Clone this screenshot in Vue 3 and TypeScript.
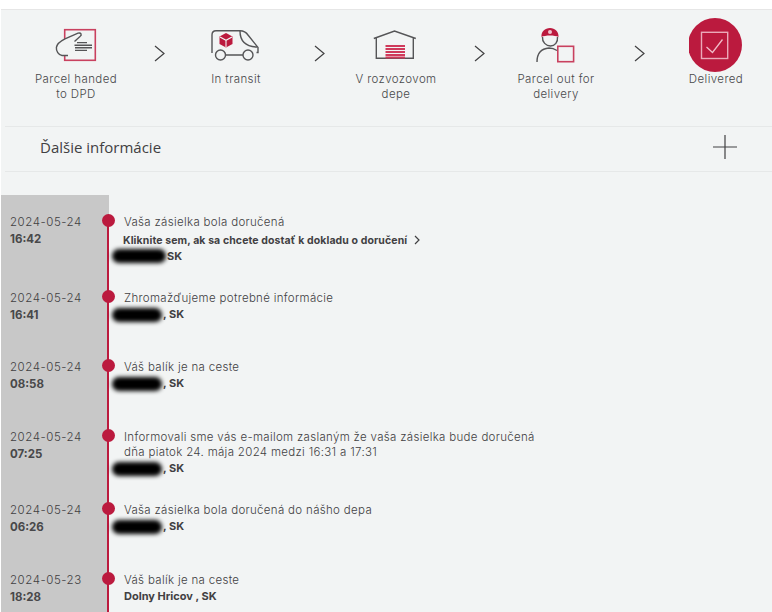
<script setup lang="ts">
interface Entry { date: string; time: string; lines: string[]; link?: string; redact: number; place: string; height: number }
const entries: Entry[] = [
  { date: '2024-05-24', time: '16:42', lines: ['Vaša zásielka bola doručená'], link: 'Kliknite sem, ak sa chcete dostať k dokladu o doručení', redact: 54, place: 'SK', height: 76 },
  { date: '2024-05-24', time: '16:41', lines: ['Zhromažďujeme potrebné informácie'], redact: 50, place: ', SK', height: 69 },
  { date: '2024-05-24', time: '08:58', lines: ['Váš balík je na ceste'], redact: 50, place: ', SK', height: 70 },
  { date: '2024-05-24', time: '07:25', lines: ['Informovali sme vás e-mailom zaslaným že vaša zásielka bude doručená', 'dňa piatok 24. mája 2024 medzi 16:31 a 17:31'], redact: 50, place: ', SK', height: 73 },
  { date: '2024-05-24', time: '06:26', lines: ['Vaša zásielka bola doručená do nášho depa'], redact: 50, place: ', SK', height: 70 },
  { date: '2024-05-23', time: '18:28', lines: ['Váš balík je na ceste'], redact: 0, place: 'Dolny Hricov , SK', height: 60 },
]
</script>

<template>
  <div class="page">
    <section class="steps">
      <div class="step">
        <svg class="icon" viewBox="49 18 54 54">
          <rect x="64.7" y="29.7" width="30.6" height="30.6" class="red-line" />
          <path class="hand" d="M68 55.5H62C58.5 55.3 56 51 56.4 47.4C56.8 43.4 60.5 41 65 38.8L78 33.2C81 32.2 82.3 35 80 36.5L74.5 41.5" />
          <path class="gray-line" d="M77 42.6H87M74.5 45.2H92M75 47.8H92M75 50.4H87" />
        </svg>
        <span class="label">Parcel handed<br />to DPD</span>
        <svg class="chevron" viewBox="0 0 11 17"><path d="M1 1L10 8.5L1 16" /></svg>
      </div>
      <div class="step">
        <svg class="icon" viewBox="209 18 54 54">
          <path class="gray-line" d="M212 53V35C212 32 213.5 30.7 216 30.7H240C244 30.7 246 32 248 35L258 47.5V52.5H256.5M225.5 55H243" />
          <path class="gray-line" d="M240 31C240 40 244 46.5 257 47" />
          <circle class="gray-line" cx="220.5" cy="55" r="5" />
          <circle class="gray-line" cx="248" cy="55" r="5" />
          <path fill="#bb1a3e" d="M226 33L232.5 36.5V44L226 47.5L219.5 44V36.5Z" />
          <path d="M220 37L226 40.3L232 37M226 40.3V47" stroke="#f2f4f4" stroke-width="1.1" fill="none" />
        </svg>
        <span class="label">In transit</span>
        <svg class="chevron" viewBox="0 0 11 17"><path d="M1 1L10 8.5L1 16" /></svg>
      </div>
      <div class="step">
        <svg class="icon" viewBox="369 18 54 54">
          <path class="gray-line" d="M373.8 38.5L394.5 31L415.8 38.5M376.3 38V58.3H413.3V38" />
          <path d="M385.5 46H405M385.5 49H405M385.5 52H405M385.5 55H405M385.5 57.5H405" stroke="#cf3a5b" stroke-width="1.8" fill="none" />
        </svg>
        <span class="label">V rozvozovom<br />depe</span>
        <svg class="chevron" viewBox="0 0 11 17"><path d="M1 1L10 8.5L1 16" /></svg>
      </div>
      <div class="step">
        <svg class="icon" viewBox="529 18 54 54">
          <path class="gray-line" d="M542.5 37C542 42 546 46 550.5 46C555 46 558 42 557.5 37M537 62C537 53 542 48.5 549 48C552 48 554 48.5 557 50.5" />
          <path fill="#bb1a3e" d="M541.5 37C541 31.5 545 28 550 28C555 28 558.8 31.5 558.5 37C555 35 545 35 541.5 37Z" />
          <circle cx="550" cy="32" r="2" fill="#f0c4cf" />
          <rect x="557.8" y="46.3" width="15.8" height="15.4" class="red-line" />
        </svg>
        <span class="label">Parcel out for<br />delivery</span>
        <svg class="chevron" viewBox="0 0 11 17"><path d="M1 1L10 8.5L1 16" /></svg>
      </div>
      <div class="step">
        <svg class="icon" viewBox="690 18 54 54">
          <circle cx="716" cy="45" r="27" fill="#bb1a3e" />
          <rect x="702.5" y="32.3" width="26.2" height="26.2" fill="none" stroke="#eba9b8" stroke-width="1.4" />
          <path d="M707.5 47L713.5 52.5L723.5 39.5" fill="none" stroke="#f0bcc8" stroke-width="1.3" />
        </svg>
        <span class="label">Delivered</span>
      </div>
    </section>

    <section class="more">
      <span class="more-title">Ďalšie informácie</span>
      <svg class="plus" viewBox="0 0 24 24"><path d="M12 0V24M0 12H24" /></svg>
    </section>

    <section class="timeline">
      <div v-for="(e, i) in entries" :key="i" class="row" :class="{ first: i === 0 }" :style="{ height: e.height + 'px' }">
        <div class="when">
          <div class="date">{{ e.date }}</div>
          <div class="time">{{ e.time }}</div>
        </div>
        <span class="dot"></span>
        <div class="what">
          <div v-for="(l, j) in e.lines" :key="j" class="line">{{ l }}</div>
          <a v-if="e.link" class="link">{{ e.link }}<svg class="link-arrow" viewBox="0 0 6 10"><path d="M1 1L5 5L1 9" /></svg></a>
          <div class="place" :class="{ tight: e.link }">
            <span v-if="e.redact" class="redact" :style="{ width: e.redact + 'px' }"></span>{{ e.place }}
          </div>
        </div>
      </div>
    </section>
  </div>
</template>

<style>
html, body { margin: 0; background: #fff; overflow: hidden; }
</style>

<style scoped>
.page {
  height: 603px;
  box-sizing: border-box;
  margin-top: 9px;
  margin-left: 1px;
  border-top: 1px solid #e6e6e6;
  background: #f2f4f4;
  display: flex;
  flex-direction: column;
  overflow: hidden;
  font-family: Inter, "Liberation Sans", sans-serif;
  color: #414042;
}
.steps {
  display: flex;
  flex: none;
  height: 116px;
  padding-top: 8px;
  box-sizing: border-box;
}
.step {
  position: relative;
  flex: 0 0 160px;
  box-sizing: border-box;
  padding-right: 10px;
  display: flex;
  flex-direction: column;
  align-items: center;
}
.icon { width: 54px; height: 54px; display: block; flex: none; }
.label {
  font-size: 11.5px;
  line-height: 15px;
  text-align: center;
  letter-spacing: 0.4px;
  font-weight: 300;
  color: #48484a;
}
.chevron {
  position: absolute;
  left: 153px;
  top: 27px;
  width: 11px;
  height: 17px;
}
.chevron path { fill: none; stroke: #414042; stroke-width: 1.2; }
.red-line { fill: none; stroke: #c9415f; stroke-width: 1.6; }
.hand { fill: #f2f4f4; stroke: #555557; stroke-width: 1.4; }
.gray-line { fill: none; stroke: #555557; stroke-width: 1.4; }
.more {
  flex: none;
  margin-left: 4px;
  height: 46px;
  box-sizing: border-box;
  border-top: 1px solid #e6e8e8;
  border-bottom: 1px solid #e6e8e8;
  display: flex;
  align-items: center;
  justify-content: space-between;
  padding: 0 35px 4px;
}
.more-title {
  font-family: "Open Sans", sans-serif;
  font-size: 15px;
  color: #414042;
}
.plus { width: 24px; height: 24px; }
.plus path { stroke: #414042; stroke-width: 1.2; fill: none; }
.timeline {
  flex: 1;
  margin-top: 23px;
  padding-top: 19px;
  background: linear-gradient(to right, #c8c8c8 108px, transparent 108px);
}
.row {
  position: relative;
  display: flex;
  font-size: 11.5px;
  line-height: 15px;
}
.row::before {
  content: "";
  position: absolute;
  left: 106px;
  top: 0;
  bottom: 0;
  width: 2px;
  background: #bb1a3e;
}
.row.first::before { top: 6px; }
.when { width: 107px; flex: none; padding-left: 9px; box-sizing: border-box; }
.date { letter-spacing: 0.55px; font-weight: 300; line-height: 16px; }
.time { font-weight: 700; margin-top: 1px; line-height: 16px; color: #48484a; }
.dot {
  position: absolute;
  left: 100.5px;
  top: 0;
  width: 13px;
  height: 13px;
  border-radius: 50%;
  background: #bb1a3e;
}
.what { padding-left: 16px; padding-top: 1px; }
.line { font-weight: 300; letter-spacing: 0.32px; }
.link {
  display: block;
  margin-top: 3px;
  margin-left: -1px;
  font-weight: 700;
  font-size: 10.5px;
  letter-spacing: 0.11px;
  line-height: 16px;
  color: #414042;
  white-space: nowrap;
}
.link-arrow { width: 6px; height: 10px; margin-left: 7px; vertical-align: -1px; }
.link-arrow path { fill: none; stroke: #414042; stroke-width: 1.2; }
.place {
  margin-top: 1px;
  font-weight: 700;
  font-size: 11px;
  line-height: 15px;
  white-space: nowrap;
  display: flex;
  align-items: center;
}
.place.tight { margin-top: 0; height: 14px; }
.redact {
  display: inline-block;
  height: 14px;
  margin-left: -12px;
  margin-right: 1px;
  border-radius: 7px;
  background: #000;
  filter: blur(2px);
}
</style>
